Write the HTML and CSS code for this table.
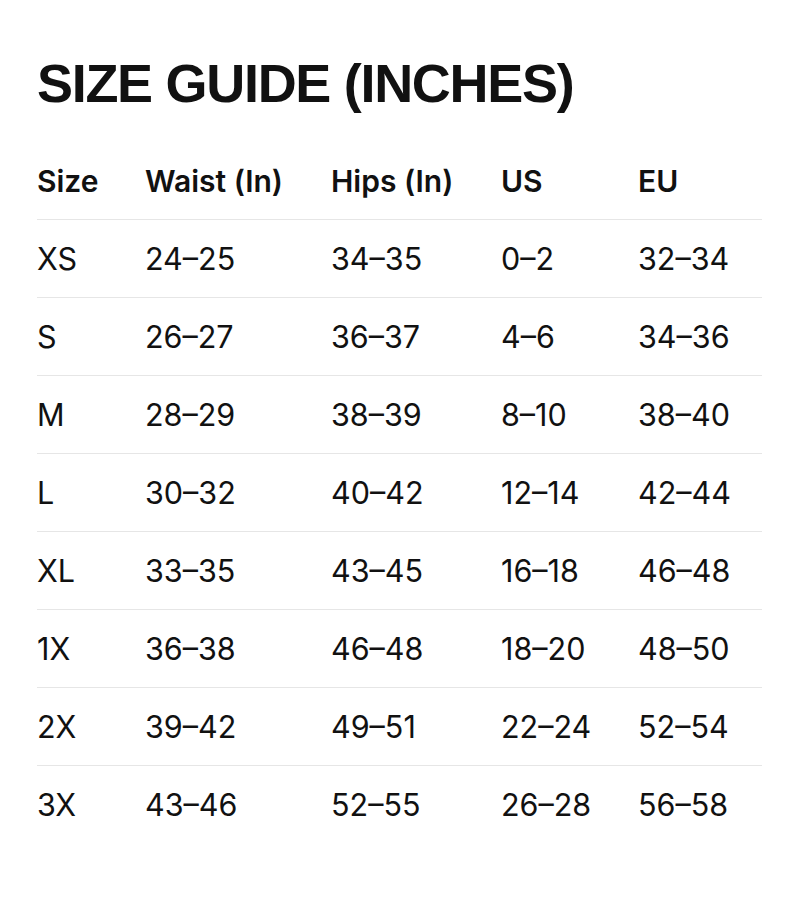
FILE: index.html
```html
<!DOCTYPE html>
<html>
<head>
<meta charset="utf-8">
<link rel="stylesheet" href="styles.css">
</head>
<body>
<div class="page">
  <h1 class="title">SIZE GUIDE (INCHES)</h1>
  <div class="table">
    <div class="row head"><span>Size</span><span>Waist (In)</span><span>Hips (In)</span><span>US</span><span>EU</span></div>
    <div class="row"><span>XS</span><span>24–25</span><span>34–35</span><span>0–2</span><span>32–34</span></div>
    <div class="row"><span>S</span><span>26–27</span><span>36–37</span><span>4–6</span><span>34–36</span></div>
    <div class="row"><span>M</span><span>28–29</span><span>38–39</span><span>8–10</span><span>38–40</span></div>
    <div class="row"><span>L</span><span>30–32</span><span>40–42</span><span>12–14</span><span>42–44</span></div>
    <div class="row"><span>XL</span><span>33–35</span><span>43–45</span><span>16–18</span><span>46–48</span></div>
    <div class="row"><span>1X</span><span>36–38</span><span>46–48</span><span>18–20</span><span>48–50</span></div>
    <div class="row"><span>2X</span><span>39–42</span><span>49–51</span><span>22–24</span><span>52–54</span></div>
    <div class="row"><span>3X</span><span>43–46</span><span>52–55</span><span>26–28</span><span>56–58</span></div>
  </div>
</div>
</body>
</html>
```
FILE: styles.css
```css
html, body {
  margin: 0;
  padding: 0;
  background: #ffffff;
}
.page {
  padding: 53px 38px 0 37px;
  color: #111111;
  font-family: Inter, "Noto Sans", sans-serif;
}
.title {
  margin: 0 0 29px 0;
  font-family: "Liberation Sans", Arial, sans-serif;
  font-weight: 700;
  font-size: 54px;
  line-height: 60px;
  letter-spacing: -1.3px;
  color: #111111;
}
.table {
  display: flex;
  flex-direction: column;
}
.row {
  display: grid;
  grid-template-columns: 108px 186px 170px 137px 1fr;
  align-items: center;
  height: 77px;
  border-top: 1px solid #e6e6e6;
  font-size: 30.5px;
  font-weight: 400;
}
.row.head {
  border-top: none;
  font-size: 30px;
  font-weight: 600;
}
```
